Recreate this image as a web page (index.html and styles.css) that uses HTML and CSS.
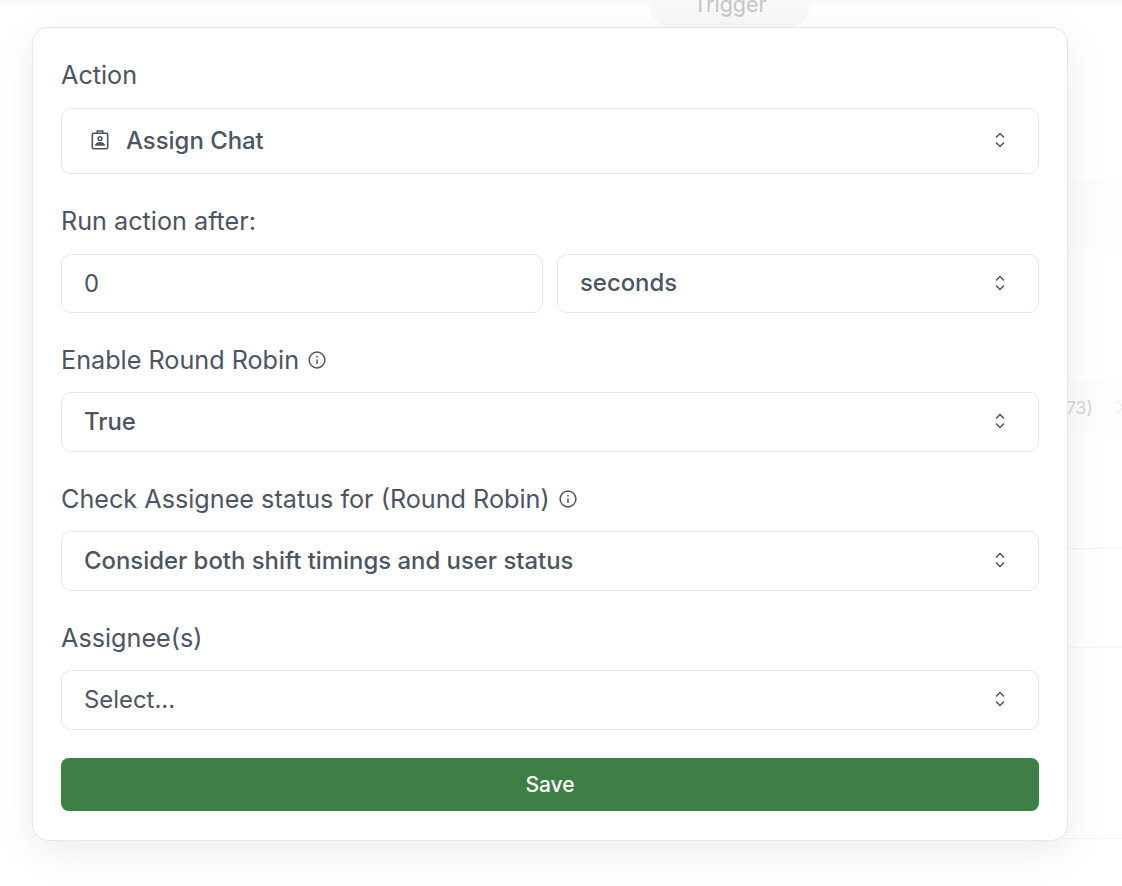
FILE: index.html
```html
<!DOCTYPE html>
<html lang="en">
<head>
    <meta charset="UTF-8">
    <meta name="viewport" content="width=device-width, initial-scale=1.0">
    <title>Edit Action</title>
    <link rel="stylesheet" href="styles.css">
</head>
<body>
    <!-- faded workflow page behind the popover -->
    <div class="backdrop">
        <div class="top-strip"></div>
        <div class="trigger-pill">Trigger</div>
        <div class="band band-one"></div>
        <div class="band band-two">
            <span>73)</span>
            <svg class="band-arrow" viewBox="0 0 8 14" fill="none" stroke="currentColor" stroke-width="1.2"><path d="M1 1L7 7L1 13"/></svg>
        </div>
        <div class="rule rule-one"></div>
        <div class="rule rule-two"></div>
        <div class="rule rule-three"></div>
    </div>

    <form class="popover">
        <div class="form-group group-wide">
            <label class="field-label">Action</label>
            <div class="select select-tall">
                <span class="select-value">
                    <svg class="action-icon" viewBox="0 0 18 20" fill="none" stroke="currentColor" stroke-width="1.6">
                        <rect x="1.3" y="3.3" width="15.4" height="15.4" rx="1.4"/>
                        <path d="M6.3 3.3V1H11.7V3.3"/>
                        <circle cx="9" cy="8.6" r="1.9"/>
                        <path d="M4.4 15.2C5 13.2 6.8 12.5 9 12.5C11.2 12.5 13 13.2 13.6 15.2Z" fill="currentColor" stroke-width="1"/>
                    </svg>
                    Assign Chat
                </span>
                <svg class="chevrons" viewBox="0 0 10 16" fill="none" stroke="currentColor" stroke-width="1.5"><path d="M1 5.5L5 1.5L9 5.5"/><path d="M1 10.5L5 14.5L9 10.5"/></svg>
            </div>
        </div>

        <div class="form-group group-wide">
            <label class="field-label">Run action after:</label>
            <div class="delay-row">
                <input class="text-input" type="text" value="0">
                <div class="select">
                    <span class="select-value">seconds</span>
                    <svg class="chevrons" viewBox="0 0 10 16" fill="none" stroke="currentColor" stroke-width="1.5"><path d="M1 5.5L5 1.5L9 5.5"/><path d="M1 10.5L5 14.5L9 10.5"/></svg>
                </div>
            </div>
        </div>

        <div class="form-group">
            <label class="field-label">Enable Round Robin
                <svg class="info-icon" viewBox="0 0 18 18" fill="none" stroke="currentColor" stroke-width="1.5"><circle cx="9" cy="9" r="7.9"/><path d="M9 8.4V13"/><path d="M9 5V6.5"/></svg>
            </label>
            <div class="select">
                <span class="select-value">True</span>
                <svg class="chevrons" viewBox="0 0 10 16" fill="none" stroke="currentColor" stroke-width="1.5"><path d="M1 5.5L5 1.5L9 5.5"/><path d="M1 10.5L5 14.5L9 10.5"/></svg>
            </div>
        </div>

        <div class="form-group">
            <label class="field-label">Check Assignee status for (Round Robin)
                <svg class="info-icon" viewBox="0 0 18 18" fill="none" stroke="currentColor" stroke-width="1.5"><circle cx="9" cy="9" r="7.9"/><path d="M9 8.4V13"/><path d="M9 5V6.5"/></svg>
            </label>
            <div class="select">
                <span class="select-value">Consider both shift timings and user status</span>
                <svg class="chevrons" viewBox="0 0 10 16" fill="none" stroke="currentColor" stroke-width="1.5"><path d="M1 5.5L5 1.5L9 5.5"/><path d="M1 10.5L5 14.5L9 10.5"/></svg>
            </div>
        </div>

        <div class="form-group">
            <label class="field-label">Assignee(s)</label>
            <div class="select">
                <span class="select-placeholder">Select...</span>
                <svg class="chevrons" viewBox="0 0 10 16" fill="none" stroke="currentColor" stroke-width="1.5"><path d="M1 5.5L5 1.5L9 5.5"/><path d="M1 10.5L5 14.5L9 10.5"/></svg>
            </div>
        </div>

        <button class="save-button" type="button">Save</button>
    </form>
</body>
</html>
```

FILE: styles.css
```css
* {
    box-sizing: border-box;
    margin: 0;
    padding: 0;
}

html,
body {
    height: 100%;
    overflow: hidden;
}

body {
    position: relative;
    background: #ffffff;
    color: #4b5563;
    font-family: 'Inter', 'Liberation Sans', sans-serif;
    padding: 27px 0 0 32px;
}

/* page behind the popover */
.backdrop {
    position: absolute;
    inset: 0;
    overflow: hidden;
}

.top-strip {
    position: absolute;
    left: 0;
    right: 0;
    top: 0;
    height: 5px;
    background: #fbfbfb;
}

.trigger-pill {
    position: absolute;
    left: 650px;
    top: -16px;
    width: 160px;
    height: 43px;
    border-radius: 21px;
    background: #f9f9f9;
    color: #c6c6c6;
    font-size: 21.5px;
    line-height: 40px;
    text-align: center;
}

.band {
    position: absolute;
    left: 1040px;
    right: 0;
    background: #fdfdfd;
}

.band-one {
    top: 179px;
    height: 71px;
}

.band-two {
    top: 381px;
    height: 52px;
    padding-left: 26px;
    display: flex;
    align-items: center;
    gap: 23px;
    color: #d6d6d9;
    font-size: 17.5px;
}

.band-arrow {
    flex: none;
    width: 8px;
    height: 14px;
    color: #ececec;
}

.rule {
    position: absolute;
    left: 1040px;
    right: 0;
    height: 1px;
    background: #f5f5f5;
}

.rule-one {
    top: 548px;
}

.rule-two {
    top: 647px;
}

.rule-three {
    top: 838px;
}

/* popover */
.popover {
    position: relative;
    width: 1036px;
    height: 814px;
    background: #ffffff;
    border: 1px solid #e5e7eb;
    border-radius: 16px;
    box-shadow: 0 10px 40px rgba(0, 0, 0, 0.08);
    padding: 32px 28px 29px;
    display: flex;
    flex-direction: column;
}

.form-group {
    display: flex;
    flex-direction: column;
    gap: 17px;
    margin-bottom: 32px;
}

.form-group:last-of-type {
    margin-bottom: 28px;
}

.group-wide {
    gap: 18px;
}

.field-label {
    display: flex;
    align-items: center;
    gap: 9px;
    font-size: 25.2px;
    line-height: 30px;
    color: #4b5563;
}

.select,
.text-input {
    height: 60px;
    border: 1px solid #e5e7eb;
    border-radius: 10px;
    background: #ffffff;
    padding: 0 22px;
    font-family: inherit;
    font-size: 23.9px;
    color: #4b5563;
}

.select {
    display: flex;
    align-items: center;
    justify-content: space-between;
    padding: 0 33px 2px 22px;
}

.select-tall {
    height: 66px;
}

.select-value {
    display: flex;
    align-items: center;
    gap: 17px;
    font-weight: 500;
}

.delay-row {
    display: grid;
    grid-template-columns: 1fr 1fr;
    gap: 14px;
}

.delay-row .text-input,
.delay-row .select {
    width: 100%;
    height: 59px;
}

.action-icon {
    width: 18px;
    height: 20px;
    margin-left: 7px;
}

.chevrons {
    width: 10px;
    height: 16px;
}

.info-icon {
    width: 18px;
    height: 18px;
}

.save-button {
    height: 53px;
    border: none;
    border-radius: 8px;
    background: #3e7f46;
    color: #ffffff;
    font-family: inherit;
    font-size: 21px;
    font-weight: 500;
    box-shadow: 0 1px 3px rgba(0, 0, 0, 0.06);
}
```
